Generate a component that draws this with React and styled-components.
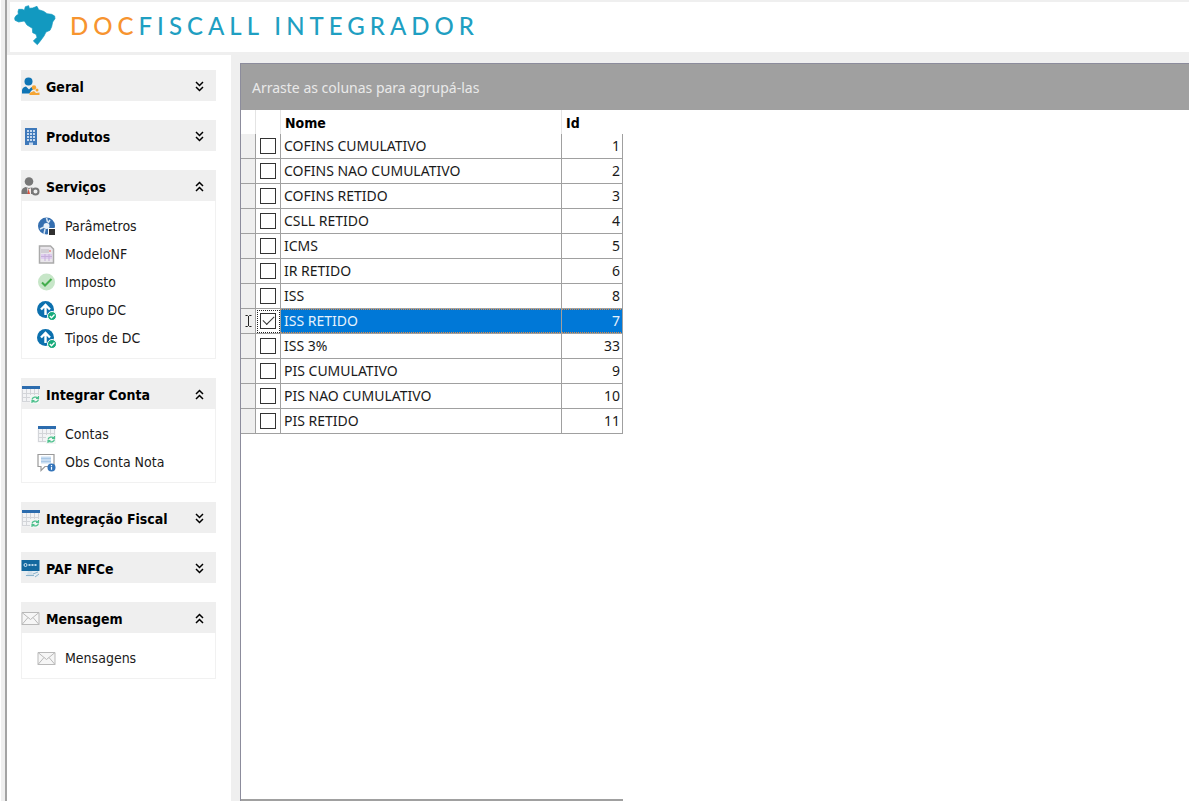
import React, { useState } from 'react'
import styled, { createGlobalStyle } from 'styled-components'

const GlobalStyle = createGlobalStyle`
  * {
    box-sizing: border-box;
  }
  body {
    margin: 0;
    background: #fff;
    font-family: 'DejaVu Sans Condensed', 'DejaVu Sans', sans-serif;
    font-size: 14px;
    color: #1a1a1a;
  }
`

const Window = styled.div`
  display: flex;
  flex-direction: column;
  min-height: 100vh;
  margin-left: 1px;
  border-left: 4px solid #efefef;
`

const Frame = styled.div`
  display: flex;
  flex-direction: column;
  flex: 1;
  border-left: 2px solid #a3a3a3;
  background: #efefef;
`

const Header = styled.header`
  display: flex;
  align-items: center;
  gap: 14px;
  height: 50px;
  margin: 2px 0 3px 3px;
  padding: 0 0 3px 4px;
  background: #fff;
`

const Brand = styled.h1`
  margin: 0;
  font-family: Lato, sans-serif;
  font-size: 24px;
  font-weight: 500;
  line-height: 32px;
  letter-spacing: 5px;
  color: #1f9fc2;
`

const BrandAccent = styled.span`
  color: #f7942f;
`

const Content = styled.div`
  display: flex;
  flex: 1;
`

const Sidebar = styled.nav`
  display: flex;
  flex-direction: column;
  gap: 19px;
  width: 224px;
  flex-shrink: 0;
  padding: 15px 15px 15px 14px;
  background: #fff;
`

const SectionTitle = styled.button`
  display: flex;
  align-items: center;
  gap: 6px;
  width: 100%;
  height: 31px;
  padding: 2px 10px 0 0;
  border: 0;
  background: #efefef;
  color: #000;
  font: inherit;
  font-weight: 700;
  text-align: left;
  cursor: pointer;

  svg {
    flex-shrink: 0;
  }
`

const SectionLabel = styled.span`
  flex: 1;
  white-space: nowrap;
`

const SectionBody = styled.ul`
  margin: 0;
  padding: 11px 0 6px 15px;
  border: 1px solid #f1f1f1;
  border-top: 0;
  list-style: none;
`

const ItemLink = styled.a`
  display: flex;
  align-items: center;
  gap: 9px;
  height: 28px;
  color: inherit;
  text-decoration: none;
`

const Main = styled.main`
  display: flex;
  flex-direction: column;
  flex: 1;
  margin: 8px 0 0 9px;
  border-left: 1px solid #8c8c9c;
  border-top: 1px solid #8c8c9c;
  background: #fff;
`

const GroupBar = styled.div`
  height: 46px;
  padding-left: 11px;
  background: #a0a0a0;
  color: #e9e9e9;
  font-family: 'Noto Sans', sans-serif;
  font-size: 14px;
  line-height: 48px;
`

const Grid = styled.table`
  width: 382px;
  table-layout: fixed;
  border-collapse: separate;
  border-spacing: 0;
  font-family: 'Noto Sans', sans-serif;
  font-size: 14px;
`

const HeadCell = styled.th`
  width: ${({ $width }) => $width}px;
  height: 24px;
  padding: 2px 4px 0;
  border-right: 1px solid ${({ $last }) => ($last ? 'transparent' : '#e4e4e4')};
  color: #000;
  font-family: 'DejaVu Sans Condensed', 'DejaVu Sans', sans-serif;
  font-size: 14px;
  line-height: 20px;
  text-align: left;
`

const Cell = styled.td`
  height: 25px;
  padding: 0 ${({ $number }) => ($number ? 2 : 3)}px;
  border-right: 1px solid #a0a0a0;
  border-bottom: 1px solid #a0a0a0;
  line-height: 24px;
  text-align: ${({ $number }) => ($number ? 'right' : 'left')};
  white-space: nowrap;
`

const MarkerCell = styled(Cell)`
  padding: 0;
  background: #efefef;
  text-align: center;

  svg {
    display: block;
    margin: 0 auto;
  }
`

const CheckCell = styled(Cell)`
  padding: 0;

  input {
    display: block;
    position: relative;
    appearance: none;
    width: 16px;
    height: 16px;
    margin: 0 auto;
    border: 1px solid #333;
    background: #fff;
  }

  input:checked::after {
    content: '';
    position: absolute;
    left: 2px;
    top: 2px;
    width: 10px;
    height: 5px;
    border-left: 1px solid #333;
    border-bottom: 1px solid #333;
    transform: rotate(-45deg);
  }
`

const Row = styled.tr`
  ${({ $active }) =>
    $active &&
    `
    color: #e6f2fc;

    ${CheckCell} {
      outline: 1px dotted #222;
      outline-offset: -2px;
    }
    ${Cell}:nth-child(n + 3) {
      background:
        linear-gradient(90deg, #d98b4a 50%, #0078d7 50%) 0 0 / 2px 1px repeat-x,
        linear-gradient(90deg, #d98b4a 50%, #0078d7 50%) 0 100% / 2px 1px repeat-x,
        #0078d7;
    }
  `}
`

const GridFooter = styled.div`
  width: 382px;
  height: 2px;
  margin-top: auto;
  background: #a0a0a0;
`

const BrazilSvg = () => (
  <svg width='42' height='41' viewBox='11 11 126 123' aria-hidden='true'>
    <path
      fill='#1299c0'
      stroke='#1299c0'
      strokeWidth='2'
      strokeLinejoin='round'
      d='M13 50L17 43L24 39L23 31L25 24L36 24L42 27L45 16L55 13L57 21L67 20L80 15L85 25L100 30L110 37L124 39L133 44L134 52L127 62L124 76L119 87L107 92L101 104L90 119L81 130L69 119L80 108L77 99L67 94L66 81L50 71L42 59L25 62L14 57Z'
    />
  </svg>
)

const Svg = ({ children }) => (
  <svg width='19' height='19' viewBox='0 0 19 19' fill='none' aria-hidden='true'>
    {children}
  </svg>
)

const PeopleSvg = () => (
  <Svg>
    <circle cx='7.500' cy='4.500' r='4' fill='#0f75b5' />
    <path d='M1 16.500v-3.500q.5-3 4-3.500l3 3 2.500-2.500 2 2-2.500 2-1.500 2.500z' fill='#0f75b5' />
    <circle cx='13' cy='10.500' r='2.200' fill='#f5a534' />
    <path d='M8.500 18v-2l4.500-2 2 2 3.500-.5V18z' fill='#f5a534' />
    <circle cx='16' cy='13' r='1.500' fill='#f5a534' />
  </Svg>
)

const BuildingSvg = () => (
  <Svg>
    <path d='M4 1h12v17H4z' fill='#3f79ba' />
    <path
      d='M6 3h2v2H6zM9 3h2v2H9zM12 3h2v2h-2zM6 6h2v2H6zM9 6h2v2H9zM12 6h2v2h-2zM6 9h2v2H6zM9 9h2v2H9zM12 9h2v2h-2zM6 12h2v2H6zM9 12h2v2H9zM12 12h2v2h-2zM8 15.500h4V18H8z'
      fill='#c5d8ee'
    />
  </Svg>
)

const ServiceSvg = () => (
  <Svg>
    <circle cx='8' cy='4.500' r='4.300' fill='#777' />
    <path d='M.5 17v-3q.5-3 4-4l3 1 4-.5.5 6.500z' fill='#777' />
    <path d='M6 11l2 1 2-1v6H7z' fill='#f3e9e7' />
    <path d='M7.500 11.500l-1 5.500h2.500z' fill='#d9503e' />
    <circle cx='14.500' cy='14.500' r='3' fill='#efefef' stroke='#777' strokeWidth='2' />
  </Svg>
)

const ParametersSvg = () => (
  <Svg>
    <circle cx='9.500' cy='9' r='8.500' fill='#356fb0' />
    <circle cx='9.500' cy='9' r='3' fill='#e9f1f9' />
    <path d='M9.500 1l1 4M13 3l-2 3M3 12l4-2M7 17l1-5' stroke='#d5e4f3' strokeWidth='1.500' />
    <path d='M11 11h8v8h-8z' fill='#fff' />
    <path d='M12 12h6v6h-6z' fill='#303030' />
  </Svg>
)

const DocumentSvg = () => (
  <Svg>
    <path d='M2.500 1h11l3 3v14h-14z' fill='#e9e6eb' stroke='#aaa' strokeWidth='1.500' />
    <path d='M4 5h8M4 7h8' stroke='#bab7be' />
    <path d='M4 9h11v5H4z' fill='#dfcdef' />
    <path d='M4 11.500h11M8 9v7M12 9v7' stroke='#c5afd9' />
    <path d='M13 5v2' stroke='#eaa0a0' strokeWidth='2' />
  </Svg>
)

const CheckSvg = () => (
  <Svg>
    <circle cx='9.500' cy='9' r='8.500' fill='#c7e6c8' />
    <path d='M5 9.500l3 3L14.500 6' stroke='#43ae4c' strokeWidth='2' />
  </Svg>
)

const UploadSvg = () => (
  <Svg>
    <circle cx='8.500' cy='8.500' r='8.500' fill='#0c70ae' />
    <path d='M8.500 14V4M4 8.500L8.500 4 13 8.500' stroke='#fff' strokeWidth='2.400' />
    <circle cx='15' cy='15' r='4.500' fill='#16aa7a' stroke='#fff' />
    <path d='M12.800 15l1.700 1.700 3-3.200' stroke='#fff' strokeWidth='1.300' />
  </Svg>
)

const TableSvg = () => (
  <Svg>
    <path d='M.5 3.500h18v14H.5z' fill='#f2f3f5' />
    <path d='M1 1h18v3H1z' fill='#2c6cae' />
    <path d='M1.500 4.500v12.500M5.500 4v13M9.500 4v13M13.500 4v7M17.500 4v6M1 8.500h17M1 12.500h12M1 16.500h10' stroke='#d3d5d9' />
    <path d='M9 10h10v9H9z' fill='#f2f6f4' />
    <path
      d='M11 14.500a3.500 3 0 0 1 6-1.500M17.500 14.500a3.500 3 0 0 1-6 1.500M17.500 11v2.500h-2.500M11 18v-2.500h2.500'
      stroke='#4fc18e'
      strokeWidth='1.200'
    />
  </Svg>
)

const CommentSvg = () => (
  <Svg>
    <path d='M1 1.500h16v12H8l-4 4v-4H1z' fill='#fff' stroke='#9a9a9a' strokeWidth='1.200' />
    <path d='M4 3.500h10v7H4z' fill='#c7dcf1' />
    <path d='M4 5.500h10M4 8.500h10' stroke='#a9c8e6' />
    <circle cx='14.500' cy='14.500' r='4' fill='#3474b9' />
    <path d='M14.500 13.800v3M14.500 12v1' stroke='#fff' strokeWidth='1.200' />
  </Svg>
)

const MonitorSvg = () => (
  <Svg>
    <path d='M.5 1h18v11H.5z' fill='#14699f' />
    <circle cx='4.500' cy='6' r='1.500' stroke='#d8ebf6' />
    <path d='M7.500 6h8' stroke='#b8d6e9' strokeWidth='2' strokeDasharray='2 1' />
    <path d='M1 12h17v6H5z' fill='#e6edf2' />
    <path d='M7 12l-1 4h6l-1-4z' fill='#d3e0e9' />
    <path d='M5 16.500h8M12 15l5-2M14 18l4-3' stroke='#8bb3cb' />
  </Svg>
)

const MailSvg = () => (
  <Svg>
    <path d='M1 3.500h17v12H1z' fill='#f6f6f6' stroke='#b9b9b9' />
    <path d='M1 3.500l8.500 7 8.500-7M1 15.500l6-7M18 15.500l-6-7' stroke='#b9b9b9' />
  </Svg>
)

const ChevronSvg = ({ up }) => (
  <svg width='13' height='13' viewBox='0 0 13 13' fill='none' aria-hidden='true'>
    <path
      d={up ? 'M3 6l3.500-3.500L10 6M3 11l3.500-3.500L10 11' : 'M3 2l3.500 3.500L10 2M3 7l3.500 3.500L10 7'}
      stroke='#000'
      strokeWidth='1.500'
    />
  </svg>
)

const CursorSvg = () => (
  <svg width='9' height='14' viewBox='0 0 9 14' fill='none' aria-hidden='true'>
    <path d='M1.500 1.500h2l1 1 1-1h2M4.500 2v10M1.500 12.500h2l1-1 1 1h2' stroke='#222' />
  </svg>
)

const sections = [
  { title: 'Geral', Icon: PeopleSvg },
  { title: 'Produtos', Icon: BuildingSvg },
  {
    title: 'Serviços',
    Icon: ServiceSvg,
    items: [
      ['Parâmetros', ParametersSvg],
      ['ModeloNF', DocumentSvg],
      ['Imposto', CheckSvg],
      ['Grupo DC', UploadSvg],
      ['Tipos de DC', UploadSvg]
    ]
  },
  {
    title: 'Integrar Conta',
    Icon: TableSvg,
    items: [
      ['Contas', TableSvg],
      ['Obs Conta Nota', CommentSvg]
    ]
  },
  { title: 'Integração Fiscal', Icon: TableSvg },
  { title: 'PAF NFCe', Icon: MonitorSvg },
  { title: 'Mensagem', Icon: MailSvg, items: [['Mensagens', MailSvg]] }
]

const taxes = [
  [1, 'COFINS CUMULATIVO'],
  [2, 'COFINS NAO CUMULATIVO'],
  [3, 'COFINS RETIDO'],
  [4, 'CSLL RETIDO'],
  [5, 'ICMS'],
  [6, 'IR RETIDO'],
  [8, 'ISS'],
  [7, 'ISS RETIDO'],
  [33, 'ISS 3%'],
  [9, 'PIS CUMULATIVO'],
  [10, 'PIS NAO CUMULATIVO'],
  [11, 'PIS RETIDO']
]

const Section = ({ title, Icon, items }) => {
  const [open, setOpen] = useState(Boolean(items))

  return (
    <div>
      <SectionTitle type='button' aria-expanded={open} onClick={() => setOpen(!open)}>
        <Icon />
        <SectionLabel>{title}</SectionLabel>
        <ChevronSvg up={open} />
      </SectionTitle>
      {open && items && (
        <SectionBody>
          {items.map(([label, ItemIcon]) => (
            <li key={label}>
              <ItemLink href='#'>
                <ItemIcon />
                {label}
              </ItemLink>
            </li>
          ))}
        </SectionBody>
      )}
    </div>
  )
}

const TaxGrid = () => {
  const [checked, setChecked] = useState([7])
  const [active, setActive] = useState(7)

  const toggle = id =>
    setChecked(checked.includes(id) ? checked.filter(c => c !== id) : [...checked, id])

  return (
    <Grid>
      <thead>
        <tr>
          <HeadCell $width={15} />
          <HeadCell $width={25} />
          <HeadCell $width={281}>Nome</HeadCell>
          <HeadCell $width={61} $last>
            Id
          </HeadCell>
        </tr>
      </thead>
      <tbody>
        {taxes.map(([id, name]) => (
          <Row key={id} $active={id === active} onClick={() => setActive(id)}>
            <MarkerCell>{id === active && <CursorSvg />}</MarkerCell>
            <CheckCell>
              <input
                type='checkbox'
                aria-label={name}
                checked={checked.includes(id)}
                onChange={() => toggle(id)}
              />
            </CheckCell>
            <Cell>{name}</Cell>
            <Cell $number>{id}</Cell>
          </Row>
        ))}
      </tbody>
    </Grid>
  )
}

const App = () => (
  <Window>
    <GlobalStyle />
    <Frame>
      <Header>
        <BrazilSvg />
        <Brand>
          <BrandAccent>DOC</BrandAccent>FISCALL INTEGRADOR
        </Brand>
      </Header>
      <Content>
        <Sidebar>
          {sections.map(section => (
            <Section key={section.title} {...section} />
          ))}
        </Sidebar>
        <Main>
          <GroupBar>Arraste as colunas para agrupá-las</GroupBar>
          <TaxGrid />
          <GridFooter />
        </Main>
      </Content>
    </Frame>
  </Window>
)

export default App
